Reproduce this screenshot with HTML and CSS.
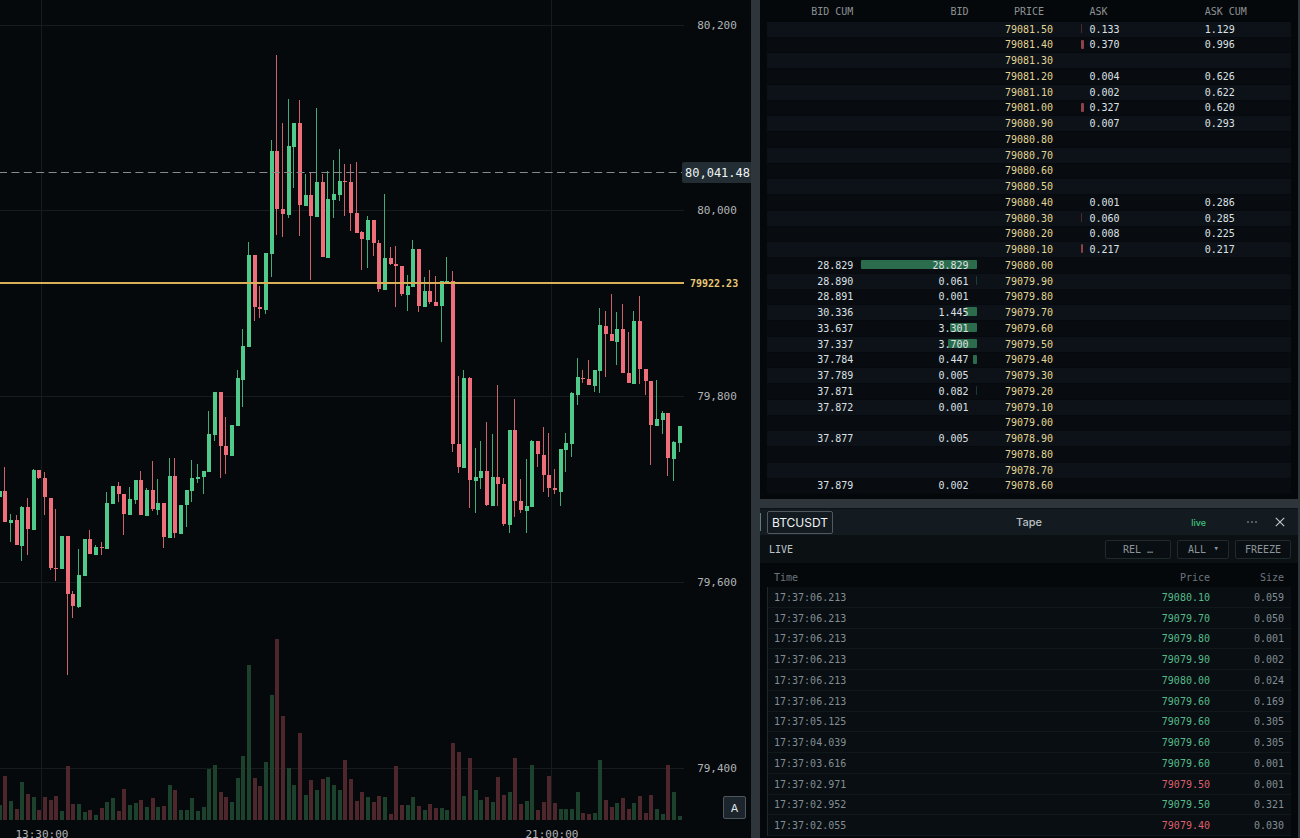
FILE: index.html
```html
<!DOCTYPE html>
<html lang="en">
<head>
    <meta charset="UTF-8">
    <meta name="viewport" content="width=device-width, initial-scale=1.0">
    <title>BTCUSDT</title>
    <link rel="stylesheet" href="styles.css">
</head>
<body>
    <div class="workspace">
        <section class="chart-panel">
            <svg id="chart" class="chart" role="img" aria-label="Price chart"></svg>
            <button class="auto-button" title="Auto scale">A</button>
        </section>

        <div class="side">
            <section class="panel ladder-panel">
                <table class="ladder">
                    <thead>
                        <tr>
                            <th class="right">BID CUM</th>
                            <th class="right">BID</th>
                            <th class="center">PRICE</th>
                            <th>ASK</th>
                            <th>ASK CUM</th>
                        </tr>
                    </thead>
                    <tbody id="ladder-rows"></tbody>
                </table>
            </section>

            <section class="panel tape-panel">
                <header class="tape-header">
                    <div class="tape-left">
                        <button class="symbol">BTCUSDT</button>
                    </div>
                    <h2 class="tape-title">Tape</h2>
                    <div class="tape-right">
                        <span class="status">live</span>
                        <button class="icon-button" aria-label="More">
                            <svg width="12" height="12" viewBox="0 0 12 12" fill="#a9b1b6">
                                <circle cx="2" cy="6" r="0.8"/>
                                <circle cx="6" cy="6" r="0.8"/>
                                <circle cx="10" cy="6" r="0.8"/>
                            </svg>
                        </button>
                        <button class="icon-button" aria-label="Close">
                            <svg width="12" height="12" viewBox="0 0 12 12" fill="none" stroke="#c5cbcf" stroke-width="1.1">
                                <path d="M1.8 1.8l8.4 8.4M10.2 1.8l-8.4 8.4"/>
                            </svg>
                        </button>
                    </div>
                </header>
                <div class="toolbar">
                    <span class="mode">LIVE</span>
                    <button class="tool rel">REL …</button>
                    <div class="tool-select">
                        <select class="tool" aria-label="Side filter">
                            <option>ALL</option>
                            <option>BUY</option>
                            <option>SELL</option>
                        </select>
                        <span class="caret">▾</span>
                    </div>
                    <button class="tool freeze">FREEZE</button>
                </div>
                <table class="tape">
                    <thead>
                        <tr>
                            <th>Time</th>
                            <th class="right">Price</th>
                            <th class="right size">Size</th>
                        </tr>
                    </thead>
                    <tbody id="tape-rows"></tbody>
                </table>
            </section>
        </div>
    </div>
    <script src="script.js"></script>
</body>
</html>
```

FILE: styles.css
```css
* {
    margin: 0;
    padding: 0;
    box-sizing: border-box;
}
html, body {
    height: 100%;
    background-color: #2e363b;
    color: #dde1e4;
    font-family: "DejaVu Sans Mono", "Liberation Mono", monospace;
    font-size: 10px;
    overflow: hidden;
}
button, select {
    font-family: inherit;
    font-size: inherit;
    color: inherit;
    cursor: pointer;
}
.workspace {
    display: grid;
    grid-template-columns: minmax(0, 751fr) minmax(0, 538fr);
    gap: 9px;
    height: 100vh;
    padding-right: 2px;
}
.right {
    text-align: right;
}
.center {
    text-align: center;
}

/* chart */
.chart-panel {
    position: relative;
    background-color: #06090c;
    overflow: hidden;
}
.chart {
    display: block;
    width: 100%;
    height: 100%;
}
.axis-text {
    font-size: 11px;
    fill: #b0b4b7;
}
.cursor-text {
    font-size: 12px;
    fill: #f0f3f5;
}
.last-text {
    font-size: 10px;
    font-weight: bold;
    fill: #e6c774;
}
.auto-button {
    position: absolute;
    right: 5px;
    bottom: 19px;
    width: 23px;
    height: 23px;
    border: 1px solid #4d575d;
    border-radius: 2px;
    background-color: #1c252b;
    color: #e3e7e9;
    font-family: Inter, sans-serif;
    font-size: 11px;
}

/* ladder */
.side {
    display: flex;
    flex-direction: column;
    gap: 9px;
    min-height: 0;
}
.panel {
    background-color: #05080b;
}
.ladder-panel {
    flex: none;
    padding: 0 7px 5px;
}
.ladder {
    width: 100%;
    table-layout: fixed;
    border-spacing: 0;
}
.ladder th {
    width: 22%;
    height: 22px;
    padding: 0 8px;
    font-weight: normal;
    color: #8c9194;
    text-align: left;
}
.ladder th:first-child,
.ladder th:last-child {
    width: 18%;
}
.ladder th.center {
    width: 20%;
    text-align: center;
}
.ladder th.right {
    text-align: right;
}
.ladder td {
    position: relative;
    height: 16px;
    padding: 0 8px;
    line-height: 14px;
    border-bottom: 1px solid #06090d;
}
.ladder tr:nth-child(4n+2) td {
    height: 15px;
}
.ladder tbody tr {
    background-color: #080c11;
}
.ladder tbody tr:nth-child(odd) {
    background-color: #0d1218;
}
.ladder .price {
    color: #e2d594;
    text-align: center;
}
.ladder .value {
    position: relative;
}
.bar {
    position: absolute;
    top: 2px;
    height: 9px;
    border-radius: 1px;
}
.bar.bid {
    right: 0;
    background-color: #2a6c4b;
}
.bar.ask {
    left: 0;
    background-color: #8b4248;
}
.bar.faint {
    opacity: 0.5;
}

/* tape */
.tape-panel {
    flex: 1;
    min-height: 0;
    overflow: hidden;
}
.tape-header {
    display: grid;
    grid-template-columns: 1fr auto 1fr;
    align-items: center;
    height: 27px;
    background-color: #131a20;
    border-top: 1px solid #0c1216;
    font-family: Inter, sans-serif;
}
.tape-left {
    display: flex;
    align-items: center;
    height: 18px;
    padding-left: 6px;
    border-left: 1px solid #5b7f80;
}
.symbol {
    height: 23px;
    padding: 0 4px;
    border: 1px solid #4f595f;
    border-radius: 2px;
    background: none;
    color: #f0f3f5;
    font-size: 12px;
}
.tape-title {
    font-size: 11px;
    font-weight: 500;
    color: #b9c0c4;
}
.tape-right {
    display: flex;
    align-items: center;
    justify-content: flex-end;
    gap: 16px;
    padding-right: 12px;
}
.status {
    margin-right: 24px;
    font-size: 9px;
    font-weight: 500;
    color: #3ec47c;
}
.icon-button {
    width: 12px;
    height: 12px;
    border: none;
    background: none;
}
.icon-button svg {
    display: block;
}
.toolbar {
    display: flex;
    align-items: center;
    gap: 6px;
    height: 28px;
    padding: 0 7px 0 9px;
    background-color: #0b1013;
}
.mode {
    margin-right: auto;
    color: #bdc4c8;
}
.tool {
    height: 19px;
    border: 1px solid #20292d;
    border-radius: 2px;
    background-color: #090e12;
    color: #8b959b;
}
.rel {
    width: 66px;
}
.freeze {
    width: 56px;
}
.tool-select {
    position: relative;
}
.tool-select .tool {
    display: block;
    width: 52px;
    padding-left: 10px;
    appearance: none;
}
.caret {
    position: absolute;
    right: 10px;
    top: 3px;
    font-size: 9px;
    color: #8b959b;
    pointer-events: none;
}
.tape {
    width: calc(100% - 14px);
    margin: 0 7px;
    border-spacing: 0;
    color: #838d93;
}
.tape th {
    height: 24px;
    padding: 4px 0 0 7px;
    font-weight: normal;
    text-align: left;
    color: #6b757b;
}
.tape th.right {
    text-align: right;
}
.tape th.size,
.tape td.size {
    width: 81px;
    padding-right: 7px;
}
.tape td {
    height: 21px;
    padding: 0 0 0 7px;
    background-color: #080e11;
    border-bottom: 1px solid #10181b;
}
.tape tr:nth-child(4n+3) td {
    height: 20px;
}
.tape td:first-child {
    border-left: 1px solid #1b2a2a;
    padding-left: 6px;
}
.tape .buy {
    color: #56bb8b;
}
.tape .sell {
    color: #de5f6c;
}
```

FILE: script.js
```js
// [side, high, body top, body bottom, low, volume]
// levels are offsets from the top of the pane, volume is the bar height
const CANDLES = [
    ['g', 491, 491, 497, 497, 15], ['r', 467, 491, 522, 522, 44], ['g', 514, 520, 523, 542, 19],
    ['r', 515, 520, 545, 545, 11], ['g', 506, 507, 546, 561, 38], ['r', 498, 507, 529, 555, 26],
    ['g', 469, 470, 530, 530, 23], ['r', 470, 470, 478, 479, 10], ['r', 472, 478, 497, 515, 23],
    ['r', 498, 498, 568, 570, 20], ['r', 509, 568, 569, 581, 24], ['g', 536, 536, 569, 569, 9],
    ['r', 536, 536, 594, 675, 54], ['r', 591, 594, 606, 618, 16], ['g', 549, 575, 607, 608, 16],
    ['g', 539, 539, 576, 576, 8], ['r', 530, 539, 554, 554, 10], ['g', 545, 547, 555, 555, 5],
    ['r', 542, 547, 548, 555, 12], ['g', 492, 503, 549, 549, 18], ['g', 486, 486, 504, 504, 22],
    ['r', 482, 486, 494, 502, 9], ['r', 494, 494, 514, 535, 31], ['g', 487, 499, 515, 515, 15],
    ['g', 480, 480, 500, 504, 17], ['r', 471, 480, 515, 515, 20], ['g', 488, 490, 516, 516, 13],
    ['r', 461, 490, 509, 511, 22], ['g', 479, 503, 510, 515, 13], ['r', 503, 503, 537, 548, 14],
    ['g', 458, 476, 538, 538, 35], ['r', 458, 476, 533, 538, 30], ['g', 505, 505, 534, 534, 10],
    ['g', 490, 490, 505, 527, 10], ['g', 460, 478, 491, 502, 22], ['g', 464, 477, 479, 483, 9],
    ['g', 471, 471, 477, 494, 13], ['g', 411, 434, 472, 472, 51], ['g', 392, 392, 435, 441, 55],
    ['r', 392, 392, 446, 478, 28], ['r', 417, 446, 455, 474, 23], ['g', 425, 425, 456, 456, 18],
    ['g', 370, 378, 426, 426, 42], ['g', 329, 346, 380, 407, 64], ['g', 242, 255, 347, 347, 155],
    ['r', 255, 255, 307, 321, 42], ['r', 286, 307, 309, 318, 34], ['g', 253, 253, 310, 314, 58],
    ['g', 140, 151, 254, 277, 125], ['r', 55, 151, 209, 235, 181], ['r', 123, 209, 214, 237, 104],
    ['g', 99, 146, 215, 218, 52], ['g', 123, 123, 147, 188, 35], ['r', 100, 123, 205, 236, 87],
    ['g', 174, 195, 206, 206, 25], ['r', 173, 195, 216, 280, 40], ['g', 108, 182, 217, 217, 30],
    ['r', 174, 182, 257, 257, 41], ['g', 171, 199, 258, 258, 43], ['g', 160, 194, 200, 218, 35],
    ['g', 149, 181, 195, 201, 30], ['r', 164, 181, 182, 216, 60], ['r', 164, 182, 213, 231, 41],
    ['r', 162, 213, 233, 233, 19], ['r', 231, 232, 239, 270, 28], ['g', 216, 220, 240, 268, 23],
    ['r', 220, 220, 243, 256, 18], ['r', 240, 243, 289, 292, 24], ['g', 194, 258, 290, 290, 23],
    ['r', 247, 258, 264, 265, 6], ['r', 246, 264, 266, 307, 54], ['r', 266, 266, 294, 296, 15],
    ['g', 275, 286, 295, 311, 15], ['g', 240, 249, 287, 287, 23], ['r', 249, 249, 306, 312, 14],
    ['g', 277, 291, 307, 307, 10], ['r', 270, 291, 302, 304, 16], ['r', 276, 302, 306, 306, 12],
    ['g', 281, 281, 306, 342, 12], ['g', 257, 281, 282, 282, 10], ['r', 271, 281, 444, 452, 77],
    ['r', 376, 444, 467, 473, 68], ['g', 370, 378, 468, 468, 24], ['r', 377, 378, 480, 508, 62],
    ['g', 448, 477, 481, 513, 30], ['g', 441, 471, 478, 489, 20], ['r', 422, 471, 505, 506, 23],
    ['g', 434, 477, 506, 506, 18], ['r', 385, 477, 484, 506, 43], ['r', 478, 484, 524, 526, 25],
    ['g', 430, 430, 525, 533, 28], ['r', 399, 430, 501, 517, 62], ['r', 479, 501, 510, 513, 16],
    ['g', 459, 506, 511, 533, 19], ['g', 440, 441, 507, 507, 55], ['r', 441, 441, 454, 467, 10],
    ['r', 427, 455, 475, 492, 18], ['r', 433, 475, 488, 497, 44], ['r', 469, 488, 490, 494, 17],
    ['g', 449, 449, 492, 506, 11], ['g', 433, 443, 450, 472, 11], ['g', 392, 393, 444, 457, 11],
    ['g', 358, 377, 395, 405, 28], ['r', 370, 378, 379, 383, 7], ['r', 360, 379, 385, 385, 6],
    ['g', 370, 370, 386, 392, 7], ['g', 308, 325, 371, 393, 60], ['r', 311, 326, 334, 377, 20],
    ['r', 294, 334, 341, 341, 13], ['g', 312, 329, 342, 365, 17], ['r', 304, 329, 373, 373, 22],
    ['r', 332, 373, 383, 383, 11], ['g', 311, 321, 384, 384, 17], ['r', 296, 321, 369, 384, 24],
    ['r', 369, 369, 381, 395, 7], ['r', 381, 381, 425, 465, 25], ['g', 380, 419, 426, 426, 11],
    ['g', 411, 413, 420, 434, 6], ['r', 413, 413, 458, 476, 55], ['g', 441, 442, 459, 481, 28],
    ['g', 426, 426, 443, 452, 4]
];

const PRICE_LINES = [['80,200', 25], ['80,000', 210], ['79,800', 396], ['79,600', 582], ['79,400', 768]];
const TIME_LINES = [['13:30:00', 7.4], ['21:00:00', 97.4]];
const COLORS = { g: '#4fca8b', r: '#ee6f79' };
const WICK_COLORS = { g: '#43ab77', r: '#cb636b' };
const VOLUME_COLORS = { g: '#1c422e', r: '#4d272c' };
const AXIS_WIDTH = 67;
const BAR_STEP = 5.665;

// [price, bid cum, bid, bid bar, ask, ask cum, ask bar]
const LADDER = [
    ['79081.50', '', '', 0, '0.133', '1.129', 1],
    ['79081.40', '', '', 0, '0.370', '0.996', 3],
    ['79081.30', '', '', 0, '', '', 0],
    ['79081.20', '', '', 0, '0.004', '0.626', 0],
    ['79081.10', '', '', 0, '0.002', '0.622', 0],
    ['79081.00', '', '', 0, '0.327', '0.620', 3],
    ['79080.90', '', '', 0, '0.007', '0.293', 0],
    ['79080.80', '', '', 0, '', '', 0],
    ['79080.70', '', '', 0, '', '', 0],
    ['79080.60', '', '', 0, '', '', 0],
    ['79080.50', '', '', 0, '', '', 0],
    ['79080.40', '', '', 0, '0.001', '0.286', 0],
    ['79080.30', '', '', 0, '0.060', '0.285', 1],
    ['79080.20', '', '', 0, '0.008', '0.225', 0],
    ['79080.10', '', '', 0, '0.217', '0.217', 2],
    ['79080.00', '28.829', '28.829', 116, '', '', 0],
    ['79079.90', '28.890', '0.061', 1, '', '', 0],
    ['79079.80', '28.891', '0.001', 0, '', '', 0],
    ['79079.70', '30.336', '1.445', 12, '', '', 0],
    ['79079.60', '33.637', '3.301', 27, '', '', 0],
    ['79079.50', '37.337', '3.700', 29, '', '', 0],
    ['79079.40', '37.784', '0.447', 4, '', '', 0],
    ['79079.30', '37.789', '0.005', 0, '', '', 0],
    ['79079.20', '37.871', '0.082', 1, '', '', 0],
    ['79079.10', '37.872', '0.001', 0, '', '', 0],
    ['79079.00', '', '', 0, '', '', 0],
    ['79078.90', '37.877', '0.005', 0, '', '', 0],
    ['79078.80', '', '', 0, '', '', 0],
    ['79078.70', '', '', 0, '', '', 0],
    ['79078.60', '37.879', '0.002', 0, '', '', 0]
];

const TRADES = [
    ['17:37:06.213', '79080.10', '0.059', 'buy'],
    ['17:37:06.213', '79079.70', '0.050', 'buy'],
    ['17:37:06.213', '79079.80', '0.001', 'buy'],
    ['17:37:06.213', '79079.90', '0.002', 'buy'],
    ['17:37:06.213', '79080.00', '0.024', 'buy'],
    ['17:37:06.213', '79079.60', '0.169', 'buy'],
    ['17:37:05.125', '79079.60', '0.305', 'buy'],
    ['17:37:04.039', '79079.60', '0.305', 'buy'],
    ['17:37:03.616', '79079.60', '0.001', 'buy'],
    ['17:37:02.971', '79079.50', '0.001', 'sell'],
    ['17:37:02.952', '79079.50', '0.321', 'buy'],
    ['17:37:02.055', '79079.40', '0.030', 'sell']
];

function rect(x, y, w, h, fill) {
    return `<rect x="${x}" y="${y}" width="${w}" height="${h}" fill="${fill}"/>`;
}

function drawChart() {
    const svg = document.getElementById('chart');
    const width = svg.clientWidth;
    const height = svg.clientHeight;
    const plot = width - AXIS_WIDTH;
    const base = height - 18;
    const labelX = plot + 33;
    // the last candle stays next to the price axis
    const barX = i => plot - 4.4 - (CANDLES.length - 1 - i) * BAR_STEP;
    let out = '';

    PRICE_LINES.forEach(([label, y]) => {
        out += rect(0, y, plot, 1, '#161b1e');
        out += `<text class="axis-text" x="${labelX}" y="${y + 4}" text-anchor="middle">${label}</text>`;
    });
    TIME_LINES.forEach(([label, i]) => {
        const x = Math.floor(barX(i));
        out += rect(x, 0, 1, base, '#161b1e');
        out += `<text class="axis-text" x="${x + 1}" y="${height}" text-anchor="middle">${label}</text>`;
    });

    CANDLES.forEach(([side, high, top, bottom, low, volume], i) => {
        const x = Math.round(barX(i) - 2);
        out += rect(x, base - volume, 4, volume, VOLUME_COLORS[side]);
        out += rect(x + 1, high, 1, low - high, WICK_COLORS[side]);
        out += rect(x, top, 4, Math.max(1, bottom - top), COLORS[side]);
    });

    out += `<path d="M-1 172.5H${plot}" stroke="#858b8f" stroke-dasharray="8 4.4" fill="none"/>`;
    out += `<rect x="${plot - 2}" y="162" width="80" height="21" rx="2" fill="#222e34"/>`;
    out += `<text class="cursor-text" x="${plot + 1}" y="177">80,041.48</text>`;
    out += rect(0, 282, plot, 2, '#d9b058');
    out += `<text class="last-text" x="${plot + 6}" y="287">79922.23</text>`;
    svg.innerHTML = out;
}

function bar(side, width) {
    if (!width) return '';
    const faint = width === 1 ? ' faint' : '';
    return `<span class="bar ${side}${faint}" style="width: ${width}px"></span>`;
}

function renderLadder() {
    document.getElementById('ladder-rows').innerHTML = LADDER.map(
        ([price, bidCum, bid, bidBar, ask, askCum, askBar]) => `<tr>
            <td class="right">${bidCum}</td>
            <td class="right">${bar('bid', bidBar)}<span class="value">${bid}</span></td>
            <td class="price">${price}</td>
            <td>${bar('ask', askBar)}<span class="value">${ask}</span></td>
            <td>${askCum}</td>
        </tr>`).join('');
}

function renderTape() {
    document.getElementById('tape-rows').innerHTML = TRADES.map(
        ([time, price, size, side]) => `<tr>
            <td>${time}</td>
            <td class="right ${side}">${price}</td>
            <td class="right size">${size}</td>
        </tr>`).join('');
}

renderLadder();
renderTape();
drawChart();
window.addEventListener('resize', drawChart);
```
